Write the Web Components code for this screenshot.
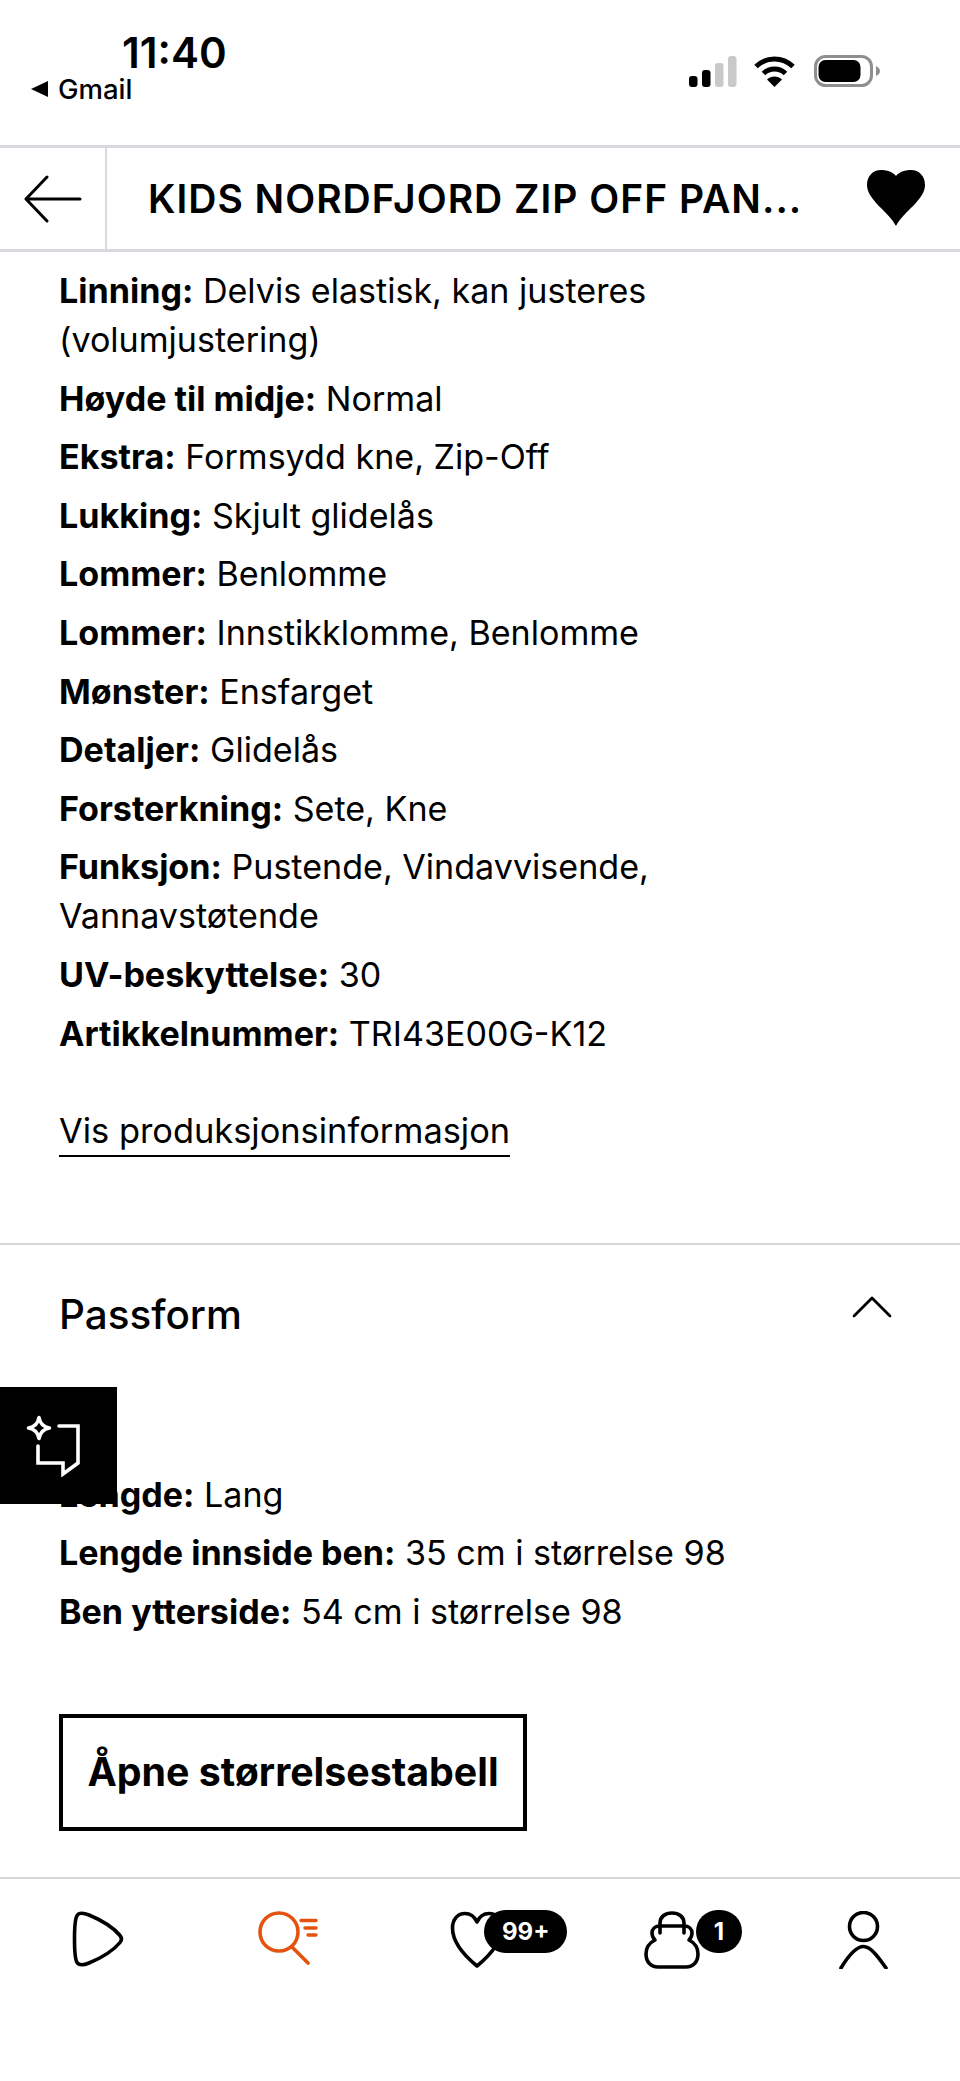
<!DOCTYPE html>
<html lang="no">
<head>
<meta charset="utf-8">
<title>Produkt</title>
<style>
  html, body { margin: 0; background: #fff; }
  body { font-family: Inter, "Liberation Sans", sans-serif; color: #000; }
</style>
</head>
<body>
<product-page>
  <status-bar slot="status" time="11:40" back="Gmail"></status-bar>
  <top-bar slot="top" title="KIDS NORDFJORD ZIP OFF PAN..."></top-bar>

  <spec-row label="Linning">Delvis elastisk, kan justeres<br>(volumjustering)</spec-row>
  <spec-row label="Høyde til midje">Normal</spec-row>
  <spec-row label="Ekstra">Formsydd kne, Zip-Off</spec-row>
  <spec-row label="Lukking">Skjult glidelås</spec-row>
  <spec-row label="Lommer">Benlomme</spec-row>
  <spec-row label="Lommer">Innstikklomme, Benlomme</spec-row>
  <spec-row label="Mønster">Ensfarget</spec-row>
  <spec-row label="Detaljer">Glidelås</spec-row>
  <spec-row label="Forsterkning">Sete, Kne</spec-row>
  <spec-row label="Funksjon">Pustende, Vindavvisende,<br>Vannavstøtende</spec-row>
  <spec-row label="UV-beskyttelse">30</spec-row>
  <spec-row label="Artikkelnummer">TRI43E00G-K12</spec-row>
  <text-link>Vis produksjonsinformasjon</text-link>

  <fold-section title="Passform">
    <spec-row label="Lengde">Lang</spec-row>
    <spec-row label="Lengde innside ben">35 cm i størrelse 98</spec-row>
    <spec-row label="Ben ytterside">54 cm i størrelse 98</spec-row>
    <box-button>Åpne størrelsestabell</box-button>
  </fold-section>

  <feedback-button slot="float"></feedback-button>

  <tab-bar slot="tabs">
    <tab-item>
      <svg style="margin-left:3px" width="54" height="56" viewBox="0 0 54 56" fill="none" stroke="#000" stroke-width="3.6" stroke-linejoin="round">
        <path d="M3.500 28C3.500 17 4 8 6 4.600C8 1.400 12 1.600 18 4C30 9 42 16 49 24.500C51 27 51 29 49 31.500C42 40 30 47 18 52C12 54.400 8 54.600 6 51.400C4 48 3.500 39 3.500 28Z"/>
      </svg>
    </tab-item>
    <tab-item>
      <svg width="60" height="54" viewBox="0 0 60 54" fill="none" stroke="#e3530f" stroke-width="3.6" stroke-linecap="round">
        <circle cx="21" cy="21" r="19"/>
        <path d="M34 36L50 52"/>
        <path d="M43 9.500H58M47 17H58M50 24H58" stroke-width="3.400"/>
      </svg>
    </tab-item>
    <tab-item count="99+">
      <svg style="margin-right:6px" width="54" height="58" viewBox="0 0 54 58" fill="none" stroke="#000" stroke-width="3.6" stroke-linejoin="round">
        <path d="M27 55C16 46 2.500 33 2.500 17C2.500 8 8 2.500 15 2.500C20 2.500 24.500 5.500 27 11C29.500 5.500 34 2.500 39 2.500C46 2.500 51.500 8 51.500 17C51.500 33 38 46 27 55Z"/>
      </svg>
    </tab-item>
    <tab-item count="1">
      <svg width="56" height="58" viewBox="0 0 56 58" fill="none" stroke="#000" stroke-width="3.6" stroke-linecap="round" stroke-linejoin="round">
        <path d="M16 22V12C16 6 21 2 28 2C35 2 40 6 40 12V22"/>
        <path d="M16 15H40C45 15 48 18 48 22C48 26 46 28 45 29C49 31 54 35 54 43C54 51 49 56 42 56H14C7 56 2 51 2 43C2 35 7 31 11 29C10 28 8 26 8 22C8 18 11 15 16 15Z"/>
      </svg>
    </tab-item>
    <tab-item>
      <svg width="50" height="58" viewBox="0 0 50 58" fill="none" stroke="#000" stroke-width="3.6" stroke-linecap="round">
        <circle cx="24.500" cy="15.500" r="14"/>
        <path d="M2 57C8 47 17 35.500 24.500 35.500C32 35.500 40 47 47 57"/>
      </svg>
    </tab-item>
  </tab-bar>
</product-page>

<script>
const FONT = 'Inter, "Liberation Sans", sans-serif';

class ProductPage extends HTMLElement {
  constructor() {
    super();
    this.attachShadow({ mode: "open" }).innerHTML = `
      <style>
        :host { display: flex; flex-direction: column; position: relative; height: 2081px; overflow: hidden; font-family: ${FONT}; }
        main { flex: 1; min-height: 0; overflow: hidden; padding-top: 14px; }
      </style>
      <slot name="status"></slot>
      <slot name="top"></slot>
      <main><slot></slot></main>
      <slot name="float"></slot>
      <slot name="tabs"></slot>
    `;
  }
}

class StatusBar extends HTMLElement {
  constructor() {
    super();
    this.attachShadow({ mode: "open" }).innerHTML = `
      <style>
        :host { display: flex; justify-content: space-between; height: 145px; box-sizing: border-box; padding: 0 80px 0 31px; }
        .left { display: flex; flex-direction: column; padding-top: 29px; }
        .time { font: 600 42px/48px ${FONT}; margin-left: 91px; }
        .back { display: flex; align-items: center; gap: 10px; font: 500 27.500px/30px ${FONT}; margin-top: -3px; }
        .icons { display: flex; align-items: center; height: 32px; margin-top: 55px; }
        .wifi { margin: 0 19px 0 17px; }
      </style>
      <div class="left">
        <div class="time">${this.getAttribute("time")}</div>
        <div class="back">
          <svg width="17" height="16" viewBox="0 0 17 16"><path d="M17 0V16L0 8Z" fill="#000"/></svg>
          <span>${this.getAttribute("back")}</span>
        </div>
      </div>
      <div class="icons">
        <svg width="48" height="31" viewBox="0 0 48 31">
          <rect x="0" y="20" width="8.500" height="11" rx="3" fill="#000"/>
          <rect x="13" y="14" width="8.500" height="17" rx="3" fill="#000"/>
          <rect x="26" y="7" width="8.500" height="24" rx="3" fill="#c9c9c9"/>
          <rect x="39" y="0" width="8.500" height="31" rx="3" fill="#c9c9c9"/>
        </svg>
        <svg class="wifi" width="41" height="31" viewBox="0 0 41 31" fill="none" stroke="#000" stroke-width="5">
          <path d="M2 10.500C12.500 .5 28.500 .5 39 10.500"/>
          <path d="M9.500 17.500C15.500 11.500 25.500 11.500 31.500 17.500"/>
          <path d="M20.500 31L13 23.500C17 19.500 24 19.500 28 23.500Z" fill="#000" stroke="none"/>
        </svg>
        <svg width="66" height="32" viewBox="0 0 66 32">
          <rect x="1.500" y="1.500" width="56" height="29" rx="10" fill="none" stroke="#8f8f8f" stroke-width="3"/>
          <rect x="4.500" y="5" width="42" height="22" rx="7" fill="#000"/>
          <path d="M62 11C64.500 12 66 14 66 16C66 18 64.500 20 62 21Z" fill="#8f8f8f"/>
        </svg>
      </div>
    `;
  }
}

class TopBar extends HTMLElement {
  constructor() {
    super();
    this.attachShadow({ mode: "open" }).innerHTML = `
      <style>
        :host { display: flex; align-items: center; height: 107px; box-sizing: border-box; border-top: 3px solid #d8d9dd; border-bottom: 3px solid #d8d9dd; }
        .back { flex: none; width: 107px; height: 100%; box-sizing: border-box; padding-left: 24px; display: flex; align-items: center; border-right: 2px solid #d8d9dd; }
        .title { flex: 1; padding-left: 41px; font: 600 39px/44px ${FONT}; white-space: nowrap; letter-spacing: 1px; }
        .heart { margin: -2px 35px 0 0; display: block; }
      </style>
      <div class="back">
        <svg width="58" height="48" viewBox="0 0 58 48" fill="none" stroke="#000" stroke-width="3" stroke-linecap="round" stroke-linejoin="round">
          <path d="M23 2L2 24L23 46M2 24H56"/>
        </svg>
      </div>
      <div class="title">${this.getAttribute("title")}</div>
      <svg class="heart" width="58" height="56" viewBox="0 0 58 56">
        <path d="M29 56C22 42 0 30 0 15C0 6 6 0 14 0C20 0 26 2 29 6C32 2 38 0 44 0C52 0 58 6 58 15C58 30 36 42 29 56Z" fill="#000"/>
      </svg>
    `;
  }
}

class SpecRow extends HTMLElement {
  constructor() {
    super();
    this.attachShadow({ mode: "open" }).innerHTML = `
      <style>
        :host { display: block; padding: 0 59px; margin-bottom: 9.600px; font: 400 34.100px/49px ${FONT}; }
        b { font-weight: 700; }
      </style>
      <b>${this.getAttribute("label")}:</b> <slot></slot>
    `;
  }
}

class TextLink extends HTMLElement {
  constructor() {
    super();
    this.attachShadow({ mode: "open" }).innerHTML = `
      <style>
        :host { display: block; padding: 0 59px; margin-top: 53px; }
        a { display: inline-block; font: 400 34.400px/40px ${FONT}; color: #000; border-bottom: 2px solid #000; padding-bottom: 4px; }
      </style>
      <a><slot></slot></a>
    `;
  }
}

class FoldSection extends HTMLElement {
  constructor() {
    super();
    this.attachShadow({ mode: "open" }).innerHTML = `
      <style>
        :host { display: block; margin-top: 86px; border-top: 2px solid #d4d5d8; }
        header { display: flex; justify-content: space-between; align-items: flex-start; padding: 48px 68px 0 59px; height: 117px; box-sizing: border-box; }
        h2 { margin: 0; font: 500 40.400px/44px ${FONT}; }
        svg { margin-top: 3px; }
        .body { padding-top: 108px; }
      </style>
      <header>
        <h2>${this.getAttribute("title")}</h2>
        <svg width="40" height="22" viewBox="0 0 40 22" fill="none" stroke="#000" stroke-width="2.800" stroke-linecap="round" stroke-linejoin="round">
          <path d="M2 20L20 2L38 20"/>
        </svg>
      </header>
      <div class="body"><slot></slot></div>
    `;
  }
}

class BoxButton extends HTMLElement {
  constructor() {
    super();
    this.attachShadow({ mode: "open" }).innerHTML = `
      <style>
        :host { display: block; padding: 0 59px; margin-top: 78px; }
        button { display: block; width: 468px; height: 117px; box-sizing: border-box; border: 4px solid #000; background: #fff; color: #000; padding: 0; font: 700 39.300px/44px ${FONT}; }
      </style>
      <button><slot></slot></button>
    `;
  }
}

class FeedbackButton extends HTMLElement {
  constructor() {
    super();
    this.attachShadow({ mode: "open" }).innerHTML = `
      <style>
        :host { position: absolute; left: 0; top: 1387px; width: 117px; height: 117px; box-sizing: border-box; padding-right: 11px; background: #000; display: flex; align-items: center; justify-content: center; }
      </style>
      <svg width="54" height="62" viewBox="0 0 54 62" fill="none" stroke="#fff" stroke-width="3.600" stroke-linecap="round" stroke-linejoin="miter">
        <path d="M13 2.500C14 8.500 17.500 12 23.500 13C17.500 14 14 17.500 13 23.500C12 17.500 8.500 14 2.500 13C8.500 12 12 8.500 13 2.500Z" stroke-linejoin="round"/>
        <path d="M33 11H52V48L37 59V48H12V31"/>
      </svg>
    `;
  }
}

class TabBar extends HTMLElement {
  constructor() {
    super();
    this.attachShadow({ mode: "open" }).innerHTML = `
      <style>
        :host { display: grid; grid-template-columns: repeat(5, 1fr); height: 204px; box-sizing: border-box; border-top: 2px solid #d4d5d8; padding-top: 32px; }
      </style>
      <slot></slot>
    `;
  }
}

class TabItem extends HTMLElement {
  constructor() {
    super();
    const count = this.getAttribute("count");
    this.attachShadow({ mode: "open" }).innerHTML = `
      <style>
        :host { display: flex; justify-content: center; align-items: flex-start; position: relative; }
        .badge { position: absolute; top: -1px; left: calc(50% + 4px); height: 43px; min-width: 45px; box-sizing: border-box; padding: 0 18px; border-radius: 22px; background: #000; color: #fff; font: 700 24px/43px ${FONT}; text-align: center; }
        .single { left: calc(50% + 24px); padding: 0; width: 46px; }
      </style>
      <slot></slot>
      ${count ? `<span class="badge ${count.length === 1 ? "single" : ""}">${count}</span>` : ""}
    `;
  }
}

customElements.define("product-page", ProductPage);
customElements.define("status-bar", StatusBar);
customElements.define("top-bar", TopBar);
customElements.define("spec-row", SpecRow);
customElements.define("text-link", TextLink);
customElements.define("fold-section", FoldSection);
customElements.define("box-button", BoxButton);
customElements.define("feedback-button", FeedbackButton);
customElements.define("tab-bar", TabBar);
customElements.define("tab-item", TabItem);
</script>
</body>
</html>
